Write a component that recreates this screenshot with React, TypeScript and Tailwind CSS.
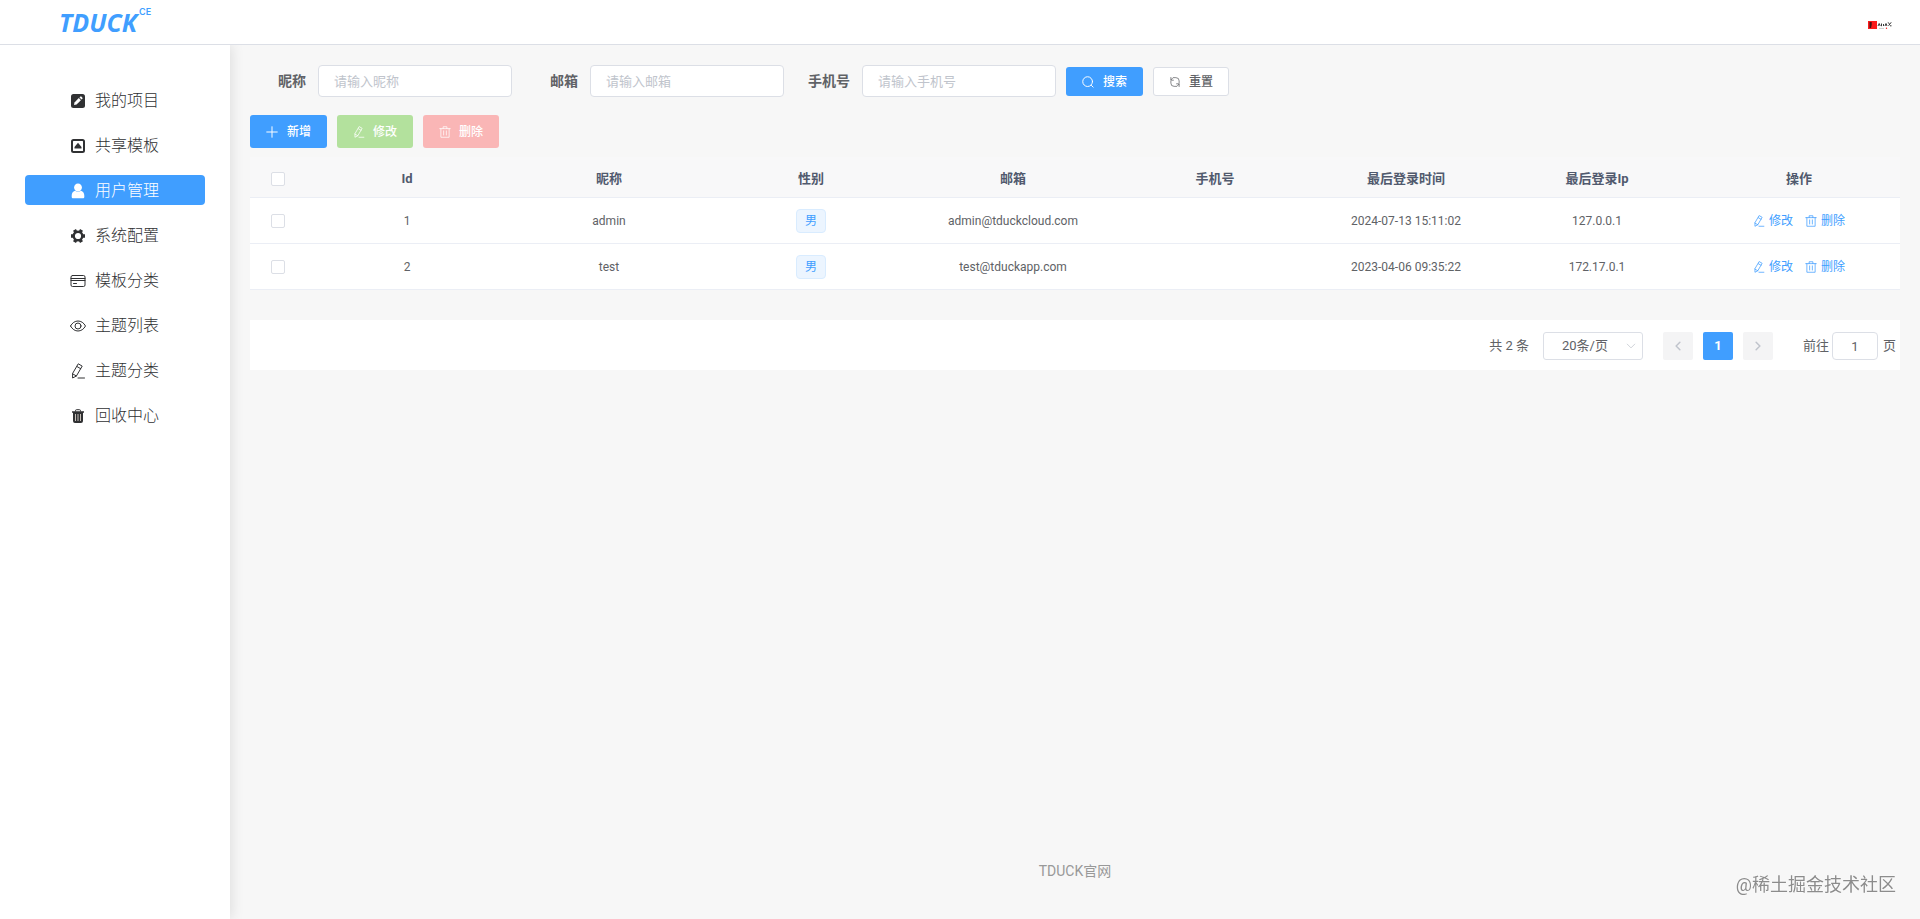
import type { ReactNode } from "react";
import clsx from "clsx";

type IconProps = { className?: string };

function Line({ className = "size-3", children }: IconProps & { children: ReactNode }) {
  return (
    <svg
      viewBox="0 0 16 16"
      className={clsx("shrink-0", className)}
      fill="none"
      stroke="currentColor"
      strokeWidth="1"
      strokeLinecap="round"
      strokeLinejoin="round"
      aria-hidden="true"
    >
      {children}
    </svg>
  );
}

const PlusIcon = ({ className }: IconProps) => (
  <Line className={className}>
    <path d="M8 1v14M1 8h14" strokeWidth="1.3" />
  </Line>
);

const EditIcon = ({ className }: IconProps) => (
  <Line className={className}>
    <path d="M8.600 1 12.200 3.100 6.400 13 2.600 15 2.600 10.800Z" />
    <path d="M7.100 3.600 10.700 5.700M2.600 10.800l3.800 2.200M8 15h6.500" />
  </Line>
);

const DeleteIcon = ({ className }: IconProps) => (
  <Line className={className}>
    <path d="M1 3.500h14M5.500 3.500V1h5v2.500M2.500 3.500V15h11V3.500M6.200 6.500v5.500M9.800 6.500v5.500" />
  </Line>
);

const SearchIcon = ({ className }: IconProps) => (
  <Line className={className}>
    <circle cx="7.500" cy="7.500" r="6.500" strokeWidth="1.300" />
    <path d="m12.500 12.500 2.300 2.300" strokeWidth="1.300" />
  </Line>
);

const RefreshIcon = ({ className }: IconProps) => (
  <Line className={className}>
    <path d="M6 2.200h3.200a4.300 4.300 0 0 1 4.300 4.300v2.300M2.500 7.200v2.300a4.300 4.300 0 0 0 4.300 4.300H10" />
    <path d="M2.500 2v3.600h3.400M2.500 5.400 5 2.600M13.500 14v-3.600h-3.400M13.500 10.600 11 13.400" />
  </Line>
);

const ArrowIcon = ({ d, className }: IconProps & { d: string }) => (
  <Line className={className}>
    <path d={d} />
  </Line>
);

const ProjectIcon = () => (
  <svg viewBox="0 0 14 14" className="size-3.5" aria-hidden="true">
    <rect width="14" height="14" rx="2.500" fill="currentColor" />
    <path d="m3 11 .5-2.600 4.300-4.300 2.100 2.100-4.300 4.300Z" fill="#fff" />
    <path d="m8.500 3.400.8-.8q.5-.4 1 0l1.100 1.100q.4.500 0 1l-.8.800Z" fill="#fff" />
  </svg>
);

const TemplateIcon = () => (
  <svg viewBox="0 0 14 14" className="size-3.5" aria-hidden="true">
    <rect x="1" y="1" width="12" height="12" rx="1.500" fill="none" stroke="currentColor" strokeWidth="2" />
    <path d="M7 3.800 10.500 8v1.600h-7V8Z" fill="currentColor" />
  </svg>
);

const UserIcon = () => (
  <svg viewBox="0 0 14 16" className="h-4 w-3.5" fill="currentColor" aria-hidden="true">
    <path d="M7 .5c2.300 0 3.900 1.700 3.900 4S9.400 8.500 7 8.500 3.100 6.800 3.100 4.500 4.700.5 7 .5Z" />
    <path d="M4 7.800C1.800 8.500.7 10.300.7 12.700v1.300c0 .8.600 1.300 1.400 1.300h9.800c.8 0 1.400-.5 1.400-1.300v-1.300c0-2.400-1.100-4.200-3.300-4.900-1.800 1.300-4.200 1.300-6 0Z" />
  </svg>
);

const GearIcon = () => (
  <svg viewBox="0 0 14 14" className="size-3.5" fill="none" stroke="currentColor" aria-hidden="true">
    <circle cx="7" cy="7" r="4.300" strokeWidth="2.400" />
    <path
      d="M11 7h3M0 7h3M9 10.500l1.500 2.600M5 3.500 3.500.9M5 10.500l-1.500 2.600M9 3.500 10.500.9"
      strokeWidth="3.400"
    />
  </svg>
);

const CardIcon = () => (
  <Line className="size-4">
    <rect x="1" y="2.500" width="14" height="11" rx="1.500" />
    <path d="M1 5.500h14M1 7.500h14M3.500 10.500h3" />
  </Line>
);

const ViewIcon = () => (
  <Line className="size-4">
    <path d="M.5 8C2.300 4.700 5 3 8 3s5.700 1.700 7.500 5C13.700 11.300 11 13 8 13S2.300 11.300.5 8Z" />
    <circle cx="8" cy="8" r="3" />
  </Line>
);

const TrashIcon = () => (
  <svg viewBox="0 0 14 14" className="size-3.5" aria-hidden="true">
    <path d="M4.500 2.500V1.700q0-1 1-1h3q1 0 1 1v.8" fill="none" stroke="currentColor" />
    <path d="M1 2.200h12v1.600H1ZM2 3.800h10V12q0 2-2 2H4q-2 0-2-2Z" fill="currentColor" />
    <path d="M4.500 5v7M7 5v7M9.500 5v7" stroke="#d8d0c8" strokeWidth=".9" />
  </svg>
);

const menu = [
  { label: "我的项目", icon: <ProjectIcon /> },
  { label: "共享模板", icon: <TemplateIcon /> },
  { label: "用户管理", icon: <UserIcon />, active: true },
  { label: "系统配置", icon: <GearIcon /> },
  { label: "模板分类", icon: <CardIcon /> },
  { label: "主题列表", icon: <ViewIcon /> },
  { label: "主题分类", icon: <EditIcon className="size-4" /> },
  { label: "回收中心", icon: <TrashIcon /> },
];

const filters = [
  { id: "nickname", label: "昵称", placeholder: "请输入昵称" },
  { id: "email", label: "邮箱", placeholder: "请输入邮箱" },
  { id: "phone", label: "手机号", placeholder: "请输入手机号" },
];

const columns = ["Id", "昵称", "性别", "邮箱", "手机号", "最后登录时间", "最后登录Ip", "操作"];

const users = [
  { id: 1, name: "admin", gender: "男", email: "admin@tduckcloud.com", phone: "", time: "2024-07-13 15:11:02", ip: "127.0.0.1" },
  { id: 2, name: "test", gender: "男", email: "test@tduckapp.com", phone: "", time: "2023-04-06 09:35:22", ip: "172.17.0.1" },
];

function Header() {
  return (
    <header className="relative z-20 flex h-[45px] items-center justify-between border-b border-[#dcdfe6] bg-white pr-7 pl-[59px]">
      <a href="#" className="flex items-start text-[#409eff]">
        <span className="font-['Open_Sans',sans-serif] text-[25px] leading-8 font-bold italic">TDUCK</span>
        <span className="pl-0.5 font-['Inter',sans-serif] text-[9px] leading-3 font-semibold">CE</span>
      </a>
      <button type="button" aria-label="avatar" className="mt-1.5">
        <svg viewBox="0 0 24 8" className="h-2 w-6">
          <rect width="9" height="8" fill="#fb1c1c" />
          <path d="M1.500 1h2.200v3l-.7 3H1.500Z" fill="#4a1414" />
          <path
            d="M10 5l1.200-2.500L12.200 5M13.500 2.500v2.700M15.500 3v2M17 5l1-2.500 1 2.500M19.800 1.500l1.700 1.200M20.500 4.800l2.700-3.500M22 4.800h1.500"
            stroke="#222"
            strokeWidth=".9"
            fill="none"
          />
          <path d="M11 7.400h5" stroke="#999" strokeWidth=".5" />
          <circle cx="18.500" cy="7.300" r=".7" fill="#fb1c1c" />
        </svg>
      </button>
    </header>
  );
}

function Sidebar() {
  return (
    <nav className="z-10 w-[230px] shrink-0 bg-white px-[25px] pt-10 shadow-[2px_0_12px_rgba(0,0,0,0.1)]">
      <ul className="flex flex-col gap-[15px]">
        {menu.map((item) => (
          <li key={item.label}>
            <a
              href="#"
              className={clsx(
                "flex h-[30px] items-center gap-[5px] rounded pt-0.5 pl-[41px] text-base font-light",
                item.active ? "bg-[#409eff] text-white" : "text-[#303133]"
              )}
            >
              <span className="flex w-6 justify-center">{item.icon}</span>
              {item.label}
            </a>
          </li>
        ))}
      </ul>
    </nav>
  );
}

function SearchForm() {
  return (
    <form className="flex items-center gap-2.5" onSubmit={(e) => e.preventDefault()}>
      {filters.map((f) => (
        <div key={f.id} className="flex items-center">
          <label htmlFor={f.id} className="w-[68px] pr-3 text-right text-sm font-bold">
            {f.label}
          </label>
          <input
            id={f.id}
            placeholder={f.placeholder}
            className="h-8 w-[194px] rounded border border-[#dcdfe6] bg-white px-[15px] text-[13px] outline-none placeholder:text-[#c0c4cc]"
          />
        </div>
      ))}
      <button
        type="submit"
        className="flex h-[29px] items-center gap-[9px] rounded-[3px] bg-[#409eff] px-4 pt-px text-xs font-medium text-white"
      >
        <SearchIcon />
        搜索
      </button>
      <button
        type="reset"
        className="flex h-[29px] items-center gap-2 rounded-[3px] border border-[#dcdfe6] bg-white px-[15px] pt-px text-xs font-medium"
      >
        <RefreshIcon />
        重置
      </button>
    </form>
  );
}

function Toolbar() {
  const base = "flex h-[33px] items-center rounded-[3px] px-4 text-xs font-medium text-white";
  return (
    <div className="mt-[18px] mb-[9px] flex gap-2.5">
      <button type="button" className={clsx(base, "gap-[9px] bg-[#409eff]")}>
        <PlusIcon />
        新增
      </button>
      <button type="button" disabled className={clsx(base, "gap-2 bg-[#b3e19d]")}>
        <EditIcon />
        修改
      </button>
      <button type="button" disabled className={clsx(base, "gap-2 bg-[#fab6b6]")}>
        <DeleteIcon />
        删除
      </button>
    </div>
  );
}

function Check({ label }: { label: string }) {
  return (
    <input
      type="checkbox"
      aria-label={label}
      className="mx-auto block size-3.5 appearance-none rounded-xs border border-[#dcdfe6] bg-white checked:bg-[#409eff]"
    />
  );
}

function UserTable() {
  return (
    <table className="w-full table-fixed border-separate border-spacing-0 text-center text-xs">
      <colgroup>
        <col className="w-14" />
        {columns.map((c) => (
          <col key={c} className={c === "最后登录时间" ? "w-[180px]" : undefined} />
        ))}
      </colgroup>
      <thead>
        <tr className="h-[41px] bg-[#f8f8f9] text-[13px] text-[#515a6e] [&_th]:border-b [&_th]:border-[#ebeef5] [&_th]:pt-[3px]">
          <th>
            <Check label="全选" />
          </th>
          {columns.map((c) => (
            <th key={c}>{c}</th>
          ))}
        </tr>
      </thead>
      <tbody className="[&_td]:border-b [&_td]:border-[#ebeef5]">
        {users.map((u) => (
          <tr key={u.id} className="h-[46px] bg-white">
            <td>
              <Check label={u.name} />
            </td>
            <td>{u.id}</td>
            <td>{u.name}</td>
            <td>
              <span className="inline-block h-6 rounded border border-[#d9ecff] bg-[#ecf5ff] px-2 leading-[22px] text-[#409eff]">
                {u.gender}
              </span>
            </td>
            <td>{u.email}</td>
            <td>{u.phone}</td>
            <td>{u.time}</td>
            <td>{u.ip}</td>
            <td>
              <div className="flex justify-center gap-3 text-[#409eff]">
                <button type="button" className="flex items-center gap-1">
                  <EditIcon />
                  修改
                </button>
                <button type="button" className="flex items-center gap-1">
                  <DeleteIcon />
                  删除
                </button>
              </div>
            </td>
          </tr>
        ))}
      </tbody>
    </table>
  );
}

function Pagination() {
  const pager = "flex h-7 w-[30px] items-center justify-center rounded-xs";
  return (
    <div className="mt-[30px] flex h-[50px] items-center justify-end bg-white pt-0.5 pr-1 text-[13px]">
      <span className="mr-3.5">共 2 条</span>
      <div className="relative mr-5">
        <select
          aria-label="每页条数"
          className="h-7 w-[100px] appearance-none rounded-[3px] border border-[#dcdfe6] bg-white pl-[18px] outline-none"
        >
          <option>20条/页</option>
        </select>
        <ArrowIcon
          d="m3 5.500 5 5 5-5"
          className="pointer-events-none absolute top-2 right-1.5 size-3 text-[#c0c4cc]"
        />
      </div>
      <div className="flex gap-2.5">
        <button type="button" disabled aria-label="上一页" className={clsx(pager, "bg-[#f4f4f5] text-[#c0c4cc]")}>
          <ArrowIcon d="M10.500 3 5.500 8l5 5" className="size-3 stroke-2" />
        </button>
        <button type="button" className={clsx(pager, "bg-[#409eff] font-bold text-white")}>
          1
        </button>
        <button type="button" disabled aria-label="下一页" className={clsx(pager, "bg-[#f4f4f5] text-[#c0c4cc]")}>
          <ArrowIcon d="m5.500 3 5 5-5 5" className="size-3 stroke-2" />
        </button>
      </div>
      <label className="ml-[30px] flex items-center">
        前往
        <input
          defaultValue="1"
          className="mr-[5px] ml-[3px] h-7 w-[46px] rounded border border-[#dcdfe6] bg-white text-center outline-none"
        />
        页
      </label>
    </div>
  );
}

export default function App() {
  return (
    <div className="flex min-h-screen flex-col bg-[#f7f7f7] font-['Roboto','Noto_Sans_CJK_SC',sans-serif] text-[#606266]">
      <Header />
      <div className="flex flex-1">
        <Sidebar />
        <main className="flex min-w-0 flex-1 flex-col px-5 pt-5">
          <SearchForm />
          <Toolbar />
          <UserTable />
          <Pagination />
          <footer className="mt-auto pb-[38px] text-center text-sm text-[#999]">
            <a href="#">TDUCK官网</a>
          </footer>
        </main>
      </div>
      <div className="pointer-events-none fixed right-6 bottom-5 text-lg text-[#8c8c8c] [text-shadow:0_0_2px_#fff]">
        @稀土掘金技术社区
      </div>
    </div>
  );
}
